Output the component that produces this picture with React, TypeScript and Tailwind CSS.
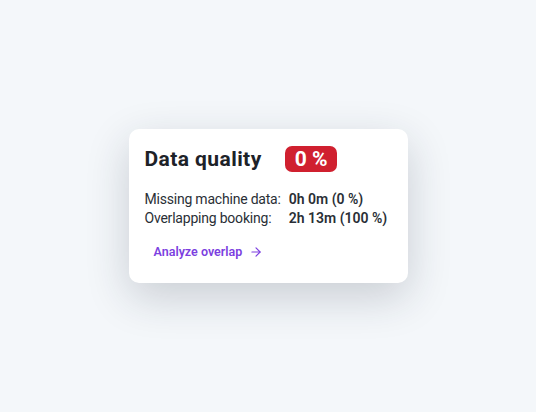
import { ArrowRight } from "lucide-react";

export default function App() {
  return (
    <div
      className="min-h-screen w-full flex items-center justify-center bg-[#f4f7fa]"
      style={{ fontFamily: "Roboto, 'Noto Sans', sans-serif" }}
    >
      <div className="w-[279px] rounded-[10px] bg-white pl-4 pr-3 pt-[17px] pb-[23px] whitespace-nowrap shadow-[0_14px_44px_rgba(30,40,60,0.2)]">
        {/* Header */}
        <div className="flex items-center gap-[23px]">
          <h2 className="text-[21px] leading-[26px] font-bold tracking-[0.02em] text-[#1d2228]">Data quality</h2>
          <span className="rounded-[7px] bg-[#d0202f] px-[10px] text-[21px] leading-[26px] font-bold text-white">0 %</span>
        </div>

        {/* Stats */}
        <div className="mt-[18px] grid grid-cols-[auto_auto] justify-start gap-x-2 text-[14px] leading-[19px] text-[#2a2f36]">
          <span className="tracking-[-0.015em]">Missing machine data:</span>
          <span className="font-semibold">0h 0m (0 %)</span>
          <span className="tracking-[-0.015em]">Overlapping booking:</span>
          <span className="font-semibold">2h 13m (100 %)</span>
        </div>

        {/* Action */}
        <button className="mt-[16px] ml-[9px] flex items-center gap-[7px] text-[12.5px] leading-[16px] font-semibold text-[#7c3fe0]">
          Analyze overlap
          <ArrowRight size={14} strokeWidth={2} />
        </button>
      </div>
    </div>
  );
}
